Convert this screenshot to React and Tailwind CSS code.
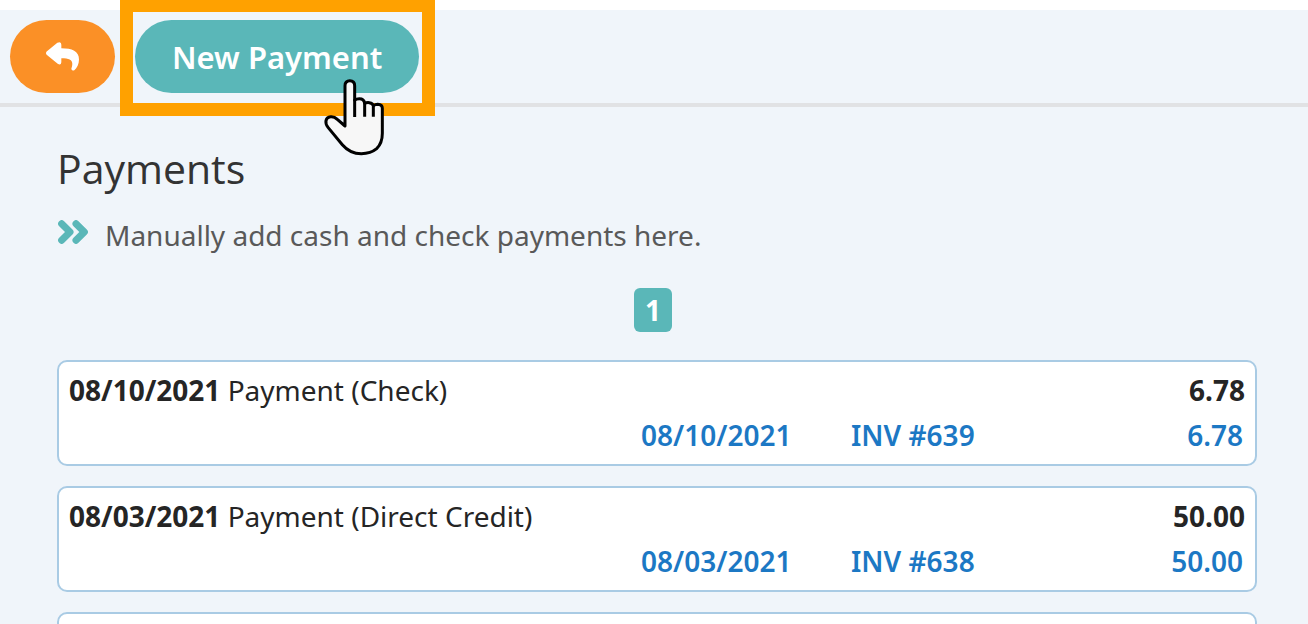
const payments = [
  { date: "08/10/2021", method: "Payment (Check)", total: "6.78", invoice: "INV #639" },
  { date: "08/03/2021", method: "Payment (Direct Credit)", total: "50.00", invoice: "INV #638" },
];

function ReplyIcon() {
  return (
    <svg viewBox="0 0 99 86" className="h-[29px] w-[33px]" fill="#fff" aria-hidden="true">
      <path d="M2 28 L34 2 Q46 -4 46 8 V18 C78 18 99 26 99 52 C99 66 93 78 85 84 Q77 88 76 80 C84 56 76 48 46 48 V60 Q45 71 35 65 L2 38 Q-2 33 2 28Z" />
    </svg>
  );
}

function ChevronsIcon() {
  return (
    <svg viewBox="0 0 90 72" className="h-6 w-[30px] shrink-0" fill="none" stroke="#5ab7b8" strokeWidth="21" strokeLinecap="round" strokeLinejoin="round" aria-hidden="true">
      <path d="M11 11 L36 36 L11 61 M54 11 L79 36 L54 61" />
    </svg>
  );
}

function HandPointer() {
  return (
    <svg viewBox="69 234 189 237" className="pointer-events-none absolute left-[188px] top-[58px] h-[79px] w-[63px]" fill="#f7f7f7" stroke="#000" strokeWidth="9" strokeLinejoin="round" aria-hidden="true">
      <path d="M135 378 V257 Q135 242 149.500 242 Q164 242 164 257 V300 Q169 296 178 296 Q192 296 194 310 Q200 307 208 308 Q219 310 220 317 Q226 313 233 313 Q247 314 247 325 V400 Q247 430 230 446 Q212 461 184 461 Q150 461 127 434 L84 382 Q76 372 78 362 Q80 351 92 350 Q103 349 112 358 Z" />
      <path d="M164 298 V351 M194 308 V350 M220 315 V350" fill="none" />
    </svg>
  );
}

function PaymentCard({ payment }) {
  return (
    <li className="rounded-[10px] border-2 border-[#a9cbe4] bg-white px-[10px] pt-[5px] pb-[7px]">
      <div className="flex h-[45px] items-center justify-between">
        <p><strong className="font-bold">{payment.date}</strong> {payment.method}</p>
        <strong className="font-bold">{payment.total}</strong>
      </div>
      <div className="flex h-[45px] items-center justify-end font-semibold text-[#1c78c4]">
        <a href="#date" className="w-[210px]">{payment.date}</a>
        <a href="#invoice" className="w-[210px]">{payment.invoice}</a>
        <a href="#amount" className="w-[184px] pr-[2px] text-right">{payment.total}</a>
      </div>
    </li>
  );
}

export default function App() {
  return (
    <div className="h-screen overflow-hidden bg-[#f0f5fa] font-['Noto_Sans','Open_Sans',sans-serif] text-[28px] leading-[44px] text-[#252525]">
      <header className="flex gap-5 border-t-[10px] border-b-4 border-t-white border-b-[#e1e2e4] px-[10px] py-[10px]">
        <button type="button" aria-label="Back" className="flex h-[73px] w-[105px] items-center justify-center rounded-full bg-[#fb9026]">
          <ReplyIcon />
        </button>
        <div className="relative">
          <button type="button" className="h-[73px] rounded-full bg-[#5ab7b8] px-[37px] text-[31px] font-semibold text-white">New Payment</button>
          <span className="pointer-events-none absolute -top-[21px] -right-[16px] -bottom-[23px] -left-[15px] border-[13px] border-[#ffa100]" />
          <HandPointer />
        </div>
      </header>
      <main className="pt-[33px] pr-[51px] pl-[57px]">
        <h1 className="font-['Open_Sans','Noto_Sans',sans-serif] text-[41px] leading-[56px] text-[#333]">Payments</h1>
        <div className="mt-[17px] flex gap-[17px] text-[#595959]">
          <span className="pt-[7px] pl-px"><ChevronsIcon /></span>
          <p>Manually add cash and check payments here.</p>
        </div>
        <nav aria-label="Pages" className="mt-[31px] flex justify-center pr-2">
          <a href="#page-1" aria-current="page" className="w-[38px] rounded-md bg-[#5ab7b8] text-center font-bold text-white">1</a>
        </nav>
        <ul className="mt-7 flex flex-col gap-5">
          {payments.map((payment) => <PaymentCard key={payment.invoice} payment={payment} />)}
          <li className="h-[106px] rounded-[10px] border-2 border-[#a9cbe4] bg-white" />
        </ul>
      </main>
    </div>
  );
}
